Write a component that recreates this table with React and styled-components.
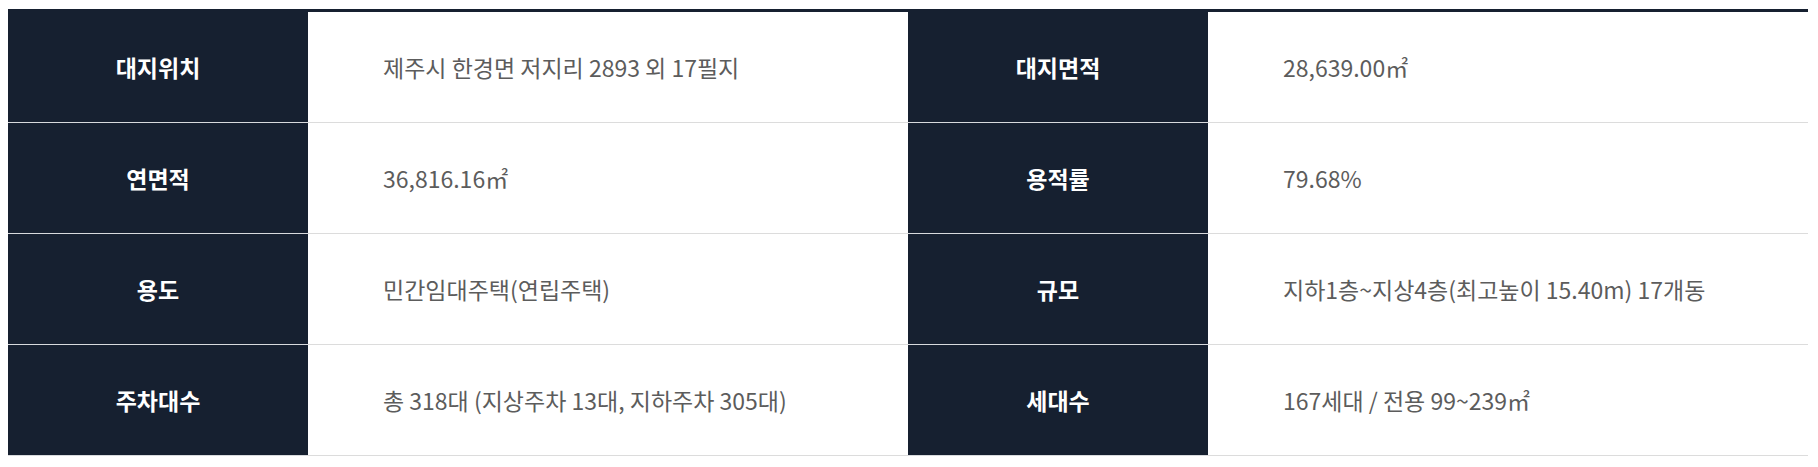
import React from "react";
import styled, { createGlobalStyle } from "styled-components";

const Global = createGlobalStyle`
  html, body { margin: 0; padding: 0; background: #fff; }
  body { font-family: "Noto Sans CJK KR", "Noto Sans", sans-serif; }
`;

const Page = styled.div`
  padding: 9px 0 0 8px;
`;

const Table = styled.div`
  width: 1800px;
  display: grid;
  grid-template-columns: 300px 600px 300px 600px;
  border-top: 3px solid #162030;
`;

const HeadCell = styled.div`
  height: 110px;
  background: #162030;
  color: #fff;
  font-size: 23px;
  font-weight: 700;
  display: flex;
  align-items: center;
  justify-content: center;
  border-bottom: 1px solid #d8dadd;
`;

const DataCell = styled.div`
  height: 110px;
  background: #fff;
  color: #5c5c5c;
  font-size: 23px;
  font-weight: 400;
  display: flex;
  align-items: center;
  padding-left: 75px;
  border-bottom: 1px solid #dcdcdc;
`;

const rows = [
  ["대지위치", "제주시 한경면 저지리 2893 외 17필지", "대지면적", "28,639.00㎡"],
  ["연면적", "36,816.16㎡", "용적률", "79.68%"],
  ["용도", "민간임대주택(연립주택)", "규모", "지하1층~지상4층(최고높이 15.40m) 17개동"],
  ["주차대수", "총 318대 (지상주차 13대, 지하주차 305대)", "세대수", "167세대 / 전용 99~239㎡"],
];

export default function App() {
  return (
    <Page>
      <Global />
      <Table>
        {rows.map((r, i) => (
          <React.Fragment key={i}>
            <HeadCell>{r[0]}</HeadCell>
            <DataCell>{r[1]}</DataCell>
            <HeadCell>{r[2]}</HeadCell>
            <DataCell>{r[3]}</DataCell>
          </React.Fragment>
        ))}
      </Table>
    </Page>
  );
}
